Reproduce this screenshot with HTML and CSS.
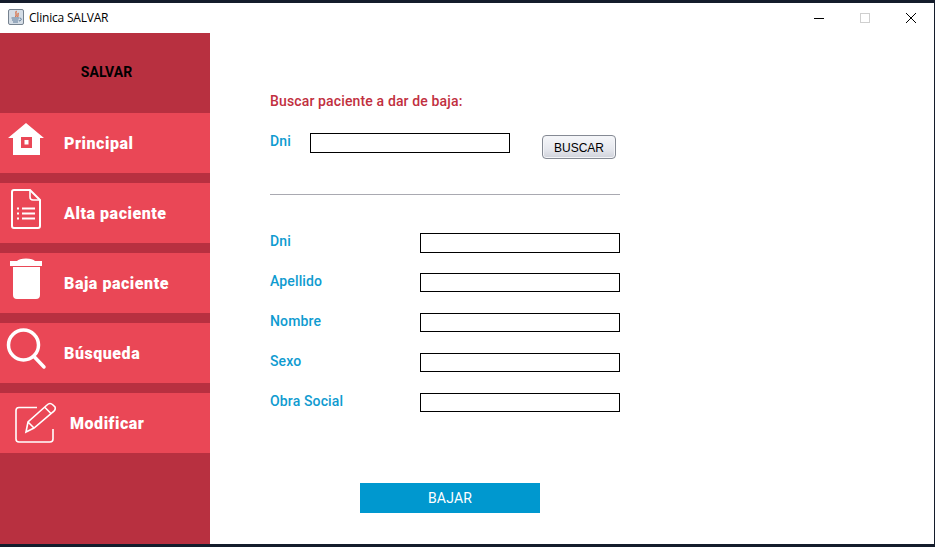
FILE: index.html
```html
<!DOCTYPE html>
<html lang="es">
<head>
<meta charset="utf-8">
<title>Clinica SALVAR</title>
<link rel="stylesheet" href="styles.css">
</head>
<body>
<div class="window">
  <header class="titlebar">
    <div class="title-left">
      <svg class="app-icon" width="16" height="16" viewBox="0 0 16 16">
        <rect x="0.5" y="0.5" width="15" height="15" rx="1.5" fill="#d5dde6" stroke="#76828f"/>
        <path d="M8.5 2 C6.5 4 9.5 5 7.5 8 M10.5 4 C9 5.5 11 6 9.5 8" fill="none" stroke="#d8663a" stroke-width="1.2"/>
        <path d="M3.5 9 H11 M4 11 H10.5 M5 13 H10" stroke="#5d7896" stroke-width="1.1"/>
        <path d="M11.5 9 C14 9 14 11.5 11 12" fill="none" stroke="#5d7896"/>
      </svg>
      <span class="title-text">Clinica SALVAR</span>
    </div>
    <div class="win-controls">
      <svg width="12" height="12" viewBox="0 0 12 12"><path d="M1 6.5 H11" stroke="#000" stroke-width="1"/></svg>
      <svg width="12" height="12" viewBox="0 0 12 12"><rect x="1.5" y="1.5" width="9" height="9" fill="none" stroke="#cfcfcf"/></svg>
      <svg width="12" height="12" viewBox="0 0 12 12"><path d="M1 1 L11 11 M11 1 L1 11" stroke="#000" stroke-width="1"/></svg>
    </div>
  </header>
  <div class="content">
    <nav class="sidebar">
      <div class="brand">SALVAR</div>
      <a class="nav-item">
        <svg class="nav-icon icon-home" width="38" height="34" viewBox="0 0 38 34"><path fill-rule="evenodd" fill="#fff" d="M18 1 L36 16 H32 V33 H5 V16 H0 Z M13 15 V26 H24 V15 Z M16.500 18 H20.500 V22.500 H16.500 Z"/></svg>
        <span>Principal</span>
      </a>
      <a class="nav-item">
        <svg class="nav-icon icon-doc" width="36" height="42" viewBox="0 0 36 42" fill="none" stroke="#fff" stroke-width="2"><path d="M4 2 H20 L30 12 V38 Q30 40 28 40 H4 Q2 40 2 38 V4 Q2 2 4 2 Z"/><path d="M20 2 V9 Q20 12 23 12 H30" stroke-width="1.600"/><path d="M7 20.500 H9 M12 20.500 H25 M7 25.500 H9 M12 25.500 H25 M7 30.500 H9 M12 30.500 H25"/></svg>
        <span>Alta paciente</span>
      </a>
      <a class="nav-item">
        <svg class="nav-icon icon-trash" width="34" height="42" viewBox="0 0 34 42"><path fill="#fff" d="M1 4 H8 Q10 1.500 17 1.500 Q24 1.500 26 4 H33 V9 H1 Z M4 10 H31 V38 Q31 42 27 42 H8 Q4 42 4 38 Z"/></svg>
        <span>Baja paciente</span>
      </a>
      <a class="nav-item">
        <svg class="nav-icon icon-search" width="42" height="44" viewBox="0 0 42 44" fill="none" stroke="#fff" stroke-width="3.500"><circle cx="18.500" cy="18" r="15"/><path d="M29 29.500 L39 40" stroke-linecap="round"/></svg>
        <span>Búsqueda</span>
      </a>
      <a class="nav-item nav-item-wide">
        <svg class="nav-icon icon-edit" width="42" height="42" viewBox="0 0 42 42" fill="none" stroke="#fff" stroke-width="1.600"><path d="M23 6.500 H5 Q2 6.500 2 9.500 V38 Q2 41 5 41 H36 Q39 41 39 38 V28"/><path d="M12 31 L14 21 L33 4 Q36 1 39 4 L41 6 Q42 9 39 11 L20 27 Z M31 6.500 L37 12.500 M14 21 L20 27"/></svg>
        <span>Modificar</span>
      </a>
    </nav>
    <main class="panel">
      <h1 class="heading">Buscar paciente a dar de baja:</h1>
      <div class="search-row">
        <label class="label search-label">Dni</label>
        <input class="field search-field" type="text">
        <button class="btn-search" type="button">BUSCAR</button>
      </div>
      <hr class="divider">
      <div class="form">
        <div class="form-row"><label class="label">Dni</label><input class="field" type="text"></div>
        <div class="form-row"><label class="label">Apellido</label><input class="field" type="text"></div>
        <div class="form-row"><label class="label">Nombre</label><input class="field" type="text"></div>
        <div class="form-row"><label class="label">Sexo</label><input class="field" type="text"></div>
        <div class="form-row"><label class="label">Obra Social</label><input class="field" type="text"></div>
      </div>
      <button class="btn-submit" type="button">BAJAR</button>
    </main>
  </div>
</div>
</body>
</html>
```
FILE: styles.css
```css
* { box-sizing: border-box; }
html, body { margin: 0; height: 100%; }
body { background: #141c2b; overflow: hidden; }
.window {
  width: 934px;
  height: 541px;
  margin-top: 3px;
  display: flex;
  flex-direction: column;
  background: #fff;
}
.titlebar {
  height: 30px;
  flex: none;
  display: flex;
  justify-content: space-between;
  align-items: center;
  padding-left: 8px;
  background: #fff;
}
.title-left { display: flex; align-items: center; gap: 5px; padding-bottom: 2px; }
.title-text { font: 12px "Open Sans", "Liberation Sans", sans-serif; color: #000; letter-spacing: -0.2px; }
.win-controls { display: flex; gap: 34px; padding-right: 17px; }
.content { flex: 1; display: flex; min-height: 0; }
.sidebar {
  width: 210px;
  flex: none;
  background: #b83040;
  display: flex;
  flex-direction: column;
  gap: 10px;
  font-family: Roboto, sans-serif;
}
.brand {
  height: 70px;
  display: flex;
  align-items: center;
  justify-content: center;
  padding-left: 3px;
  padding-top: 7px;
  font-size: 14px;
  font-weight: 700;
  color: #000;
}
.nav-item {
  height: 60px;
  position: relative;
  display: flex;
  align-items: center;
  padding-left: 64px;
  background: #ea4756;
  color: #fff;
  font-size: 16px;
  font-weight: 900;
  letter-spacing: 0.55px;
}
.nav-item-wide { padding-left: 70px; }
.nav-icon { position: absolute; }
.icon-home { left: 8px; top: 9px; }
.icon-doc { left: 10px; top: 5px; }
.icon-trash { left: 9px; top: 4px; }
.icon-search { left: 5px; top: 4px; }
.icon-edit { left: 14px; top: 8px; }
.panel {
  flex: 1;
  padding: 58px 0 0 60px;
  font-family: Roboto, sans-serif;
  display: flex;
  flex-direction: column;
  align-items: flex-start;
}
.heading {
  margin: 0;
  height: 20px;
  line-height: 20px;
  font-size: 14px;
  font-weight: 500;
  letter-spacing: 0.14px;
  color: #c12f40;
}
.label {
  font-size: 14px;
  font-weight: 500;
  letter-spacing: 0.14px;
  color: #0f9bd0;
  line-height: 16px;
}
.search-row {
  margin-top: 22px;
  width: 346px;
  height: 26px;
  display: flex;
  align-items: flex-start;
}
.search-label { width: 40px; }
.field {
  width: 200px;
  height: 20px;
  padding: 0 2px;
  margin: 0;
  border: 1px solid #000;
  border-radius: 0;
  background: #fff;
  flex: none;
}
.btn-search {
  width: 74px;
  height: 24px;
  margin: 2px 0 0 32px;
  padding: 2px 0 0;
  flex: none;
  border: 1px solid #858a94;
  border-radius: 4px;
  background: linear-gradient(#f6f7fa, #e6e8ee 60%, #cfd2da);
  box-shadow: inset 0 0 0 1px #f4f5f8;
  color: #000;
  font: 12px "Liberation Sans", sans-serif;
}
.divider {
  width: 350px;
  height: 1px;
  margin: 35px 0 0;
  border: 0;
  background: #a9a9b1;
}
.form {
  margin-top: 38px;
  display: flex;
  flex-direction: column;
  gap: 20px;
}
.form-row {
  width: 350px;
  height: 20px;
  display: flex;
  justify-content: space-between;
  align-items: flex-start;
}
.form-row + .form-row .field { height: 19px; }
.btn-submit {
  width: 180px;
  height: 30px;
  margin: 70px 0 0 90px;
  padding: 0;
  border: 0;
  background: #0098cf;
  color: #fff;
  font: 400 14px Roboto, sans-serif;
  letter-spacing: 0.2px;
}
```
